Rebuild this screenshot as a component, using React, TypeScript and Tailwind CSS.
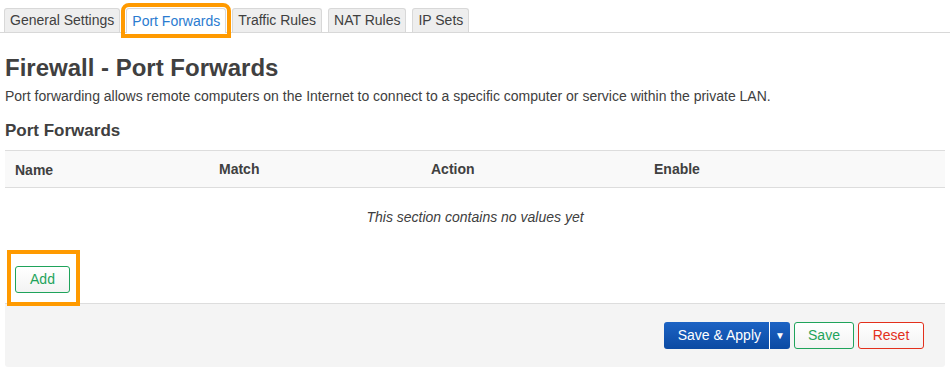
import React from "react";

const tabs = ["General Settings", "Port Forwards", "Traffic Rules", "NAT Rules", "IP Sets"];

function Tabs() {
  return (
    <ul className="flex items-end gap-[6px] border-b border-[#d8d8d8] pl-[4px] pt-[8px]">
      {tabs.map((t) =>
        t === "Port Forwards" ? (
          <li
            key={t}
            className="-mb-px flex h-[25px] items-center rounded-t-[3px] border border-b-0 border-[#d8d8d8] bg-white px-[5px] text-[14px] text-[#2a7bd0] outline-4 outline-offset-[1px] outline-[#ff9a00]"
          >
            {t}
          </li>
        ) : (
          <li
            key={t}
            className="flex h-[24px] items-center rounded-t-[3px] border border-b-0 border-[#d8d8d8] bg-[#eeeeee] px-[5px] text-[14px] text-[#404040]"
          >
            {t}
          </li>
        )
      )}
    </ul>
  );
}

function App() {
  return (
    <div className="h-[385px] w-[950px] overflow-hidden bg-white font-['Liberation_Sans',Arial,sans-serif] text-[#404040]">
      <Tabs />
      <div className="px-[5px]">
        <h2 className="mt-[20px] text-[24px] font-bold leading-[30px]">Firewall - Port Forwards</h2>
        <p className="mt-[3px] text-[14px] leading-[20px]">
          Port forwarding allows remote computers on the Internet to connect to a specific computer or service within the private LAN.
        </p>
        <h3 className="mt-[14px] text-[17px] font-bold leading-[22px]">Port Forwards</h3>

        <div className="mt-[8px] w-[940px]">
          <div className="grid h-[38px] grid-cols-[204px_212px_223px_1fr] items-center border-y border-[#dddddd] bg-[#f9f9f9] pl-[10px] text-[14px] font-bold">
            <span className="pt-[2px]">Name</span>
            <span>Match</span>
            <span>Action</span>
            <span>Enable</span>
          </div>
          <div className="flex h-[58px] items-center justify-center text-[14px] italic">
            This section contains no values yet
          </div>
        </div>

        <div className="mt-[8px] ml-[6px] w-[65px] pl-[4px] pt-[12px] pb-[9px] outline-4 outline-[#ff9a00]">
          <button className="h-[27px] w-[55px] rounded-[3px] border border-[#1fa35b] bg-gradient-to-b from-white to-[#f3f3f3] text-[14px] text-[#1fa35b]">
            Add
          </button>
        </div>

        <div className="mt-[1px] flex h-[64px] w-[940px] items-center justify-end gap-[4px] rounded-b-[3px] border-t border-[#dddddd] bg-[#f4f4f4] pr-[21px]">
          <div className="flex h-[27px] items-stretch rounded-[3px] bg-gradient-to-b from-[#1c63c4] to-[#0b4aa3] text-[14px] text-white">
            <span className="flex items-center pl-[14px] pr-[8px]">Save &amp; Apply</span>
            <span className="flex w-[21px] items-center justify-center border-l border-white text-[10px]">▼</span>
          </div>
          <button className="h-[27px] w-[60px] rounded-[3px] border border-[#1fa35b] bg-gradient-to-b from-white to-[#f3f3f3] text-[14px] text-[#1fa35b]">
            Save
          </button>
          <button className="h-[27px] w-[66px] rounded-[3px] border border-[#e3301c] bg-gradient-to-b from-white to-[#f3f3f3] text-[14px] text-[#e3301c]">
            Reset
          </button>
        </div>
      </div>
    </div>
  );
}

export default App;
